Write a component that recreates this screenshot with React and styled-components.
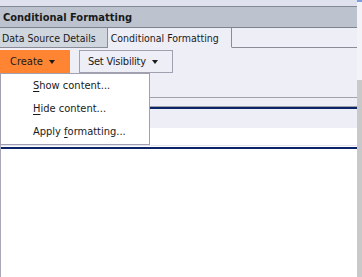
import React from "react";
import styled, { createGlobalStyle } from "styled-components";

const GlobalStyle = createGlobalStyle`
  html, body {
    margin: 0;
    padding: 0;
    background: #ffffff;
  }
  body {
    font-family: "DejaVu Sans Condensed", "DejaVu Sans", sans-serif;
    font-size: 11px;
    color: #1a1a1a;
  }
`;

const Page = styled.div`
  width: 362px;
  height: 277px;
  overflow: hidden;
  display: flex;
`;

const Main = styled.div`
  width: 357px;
  display: flex;
  flex-direction: column;
`;

const ScrollArea = styled.div`
  width: 5px;
  display: flex;
  flex-direction: column;
  background: #f3f3f7;
  border-top: 2px solid #7a9ee0;
`;

const ScrollThumb = styled.div`
  margin-top: 78px;
  flex: 1;
  background: #c9c9c9;
`;

const TopStrip = styled.div`
  height: 6px;
  background: #dfe2ee;
`;

const Header = styled.div`
  height: 20px;
  background: #bcc2ce;
  border-top: 1px solid #858896;
  border-bottom: 1px solid #7f8290;
  display: flex;
  align-items: center;
  padding-left: 3px;
  font-weight: bold;
  font-size: 11px;
`;

const TabRow = styled.div`
  height: 20px;
  display: flex;
  background: #eeeef7;
  font-size: 10.5px;
`;

const Tab = styled.div`
  display: flex;
  align-items: center;
  padding: ${(p) => (p.$active ? "0 12px 0 3px" : "0 11px 0 2px")};
  background: ${(p) => (p.$active ? "#eeeef7" : "#d0d6de")};
  border-right: 1px solid #8a8c98;
  border-bottom: 1px solid ${(p) => (p.$active ? "transparent" : "#8a8c98")};
`;

const TabFill = styled.div`
  flex: 1;
  border-bottom: 1px solid #8a8c98;
`;

const Body = styled.div`
  position: relative;
  flex: 1;
  display: flex;
  flex-direction: column;
  border-left: 1px solid #a8a8b8;
`;

const Toolbar = styled.div`
  height: 47px;
  background: #eeeef7;
  border-bottom: 1px solid #a2a2aa;
  display: flex;
  align-items: flex-start;
  gap: 9px;
  padding-top: 2px;
  margin-left: -1px;
`;

const ToolButton = styled.div`
  height: ${(p) => (p.$open ? "23px" : "21px")};
  display: flex;
  align-items: center;
  gap: 6px;
  padding: ${(p) => (p.$open ? "0 15px 0 10px" : "0 14px 0 8px")};
  background: ${(p) => (p.$open ? "#ff8533" : "#eeeef7")};
  border: ${(p) => (p.$open ? "none" : "1px solid #a0a0ae")};
  letter-spacing: ${(p) => (p.$open ? "0" : "-0.2px")};
`;

const Caret = styled.span`
  width: 0;
  height: 0;
  border-left: 3.5px solid transparent;
  border-right: 3.5px solid transparent;
  border-top: 4px solid #1a1a1a;
`;

const GridHeader = styled.div`
  height: 8px;
  background: #eeeef7;
  border-bottom: 1px solid #a0a0aa;
`;

const NavyRule = styled.div`
  height: 2px;
  background: #0b2468;
`;

const GridRow = styled.div`
  height: ${(p) => p.$h}px;
  background: ${(p) => p.$bg};
  border-bottom: ${(p) => (p.$line ? `1px solid ${p.$line}` : "none")};
`;

const Filler = styled.div`
  flex: 1;
  background: #ffffff;
`;

const Menu = styled.div`
  position: absolute;
  left: -1px;
  top: 25px;
  width: 148px;
  padding: 0 0 1px;
  background: #ffffff;
  border: 1px solid #a0a0b0;
  z-index: 2;
`;

const MenuItem = styled.div`
  height: 23px;
  line-height: 23px;
  padding-left: 32px;
  white-space: pre;
`;

const Key = styled.span`
  text-decoration: underline;
  text-underline-offset: 2px;
`;

const items = [
  ["", "S", "how content..."],
  ["", "H", "ide content..."],
  ["Apply ", "f", "ormatting..."],
];

export default function App() {
  return (
    <>
      <GlobalStyle />
      <Page>
        <Main>
          <TopStrip />
          <Header>Conditional Formatting</Header>
          <TabRow>
            <Tab>Data Source Details</Tab>
            <Tab $active>Conditional Formatting</Tab>
            <TabFill />
          </TabRow>
          <Body>
            <Toolbar>
              <ToolButton $open>
                Create <Caret />
              </ToolButton>
              <ToolButton>
                Set Visibility <Caret />
              </ToolButton>
            </Toolbar>
            <GridHeader />
            <NavyRule />
            <GridRow $h={19} $bg="#eeeef7" />
            <GridRow $h={17} $bg="#ffffff" $line="#e4e4f0" />
            <GridRow $h={1} $bg="#ffffff" />
            <NavyRule />
            <Filler />
            <Menu>
              {items.map(([pre, key, rest]) => (
                <MenuItem key={key}>
                  {pre}
                  <Key>{key}</Key>
                  {rest}
                </MenuItem>
              ))}
            </Menu>
          </Body>
        </Main>
        <ScrollArea>
          <ScrollThumb />
        </ScrollArea>
      </Page>
    </>
  );
}
